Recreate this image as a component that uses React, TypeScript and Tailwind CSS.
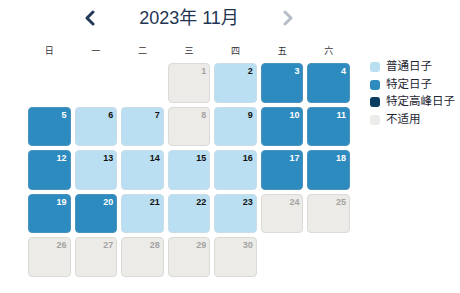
import React from 'react';

type Kind = 'normal' | 'special' | 'peak' | 'na';

const weekdays = ['日', '一', '二', '三', '四', '五', '六'];

// 2023年11月: 1号是星期三
const dayKinds: Record<number, Kind> = {
  1: 'na', 2: 'normal', 3: 'special', 4: 'special',
  5: 'special', 6: 'normal', 7: 'normal', 8: 'na', 9: 'normal', 10: 'special', 11: 'special',
  12: 'special', 13: 'normal', 14: 'normal', 15: 'normal', 16: 'normal', 17: 'special', 18: 'special',
  19: 'special', 20: 'special', 21: 'normal', 22: 'normal', 23: 'normal', 24: 'na', 25: 'na',
  26: 'na', 27: 'na', 28: 'na', 29: 'na', 30: 'na',
};

const cellStyles: Record<Kind, string> = {
  normal: 'bg-[#badff2] border-[#c9dde8] text-[#111]',
  special: 'bg-[#2e8bc0] border-[#4a93bd] text-white',
  peak: 'bg-[#0b3d60] border-[#0b3d60] text-white',
  na: 'bg-[#edebe7] border-[#dcdad6] text-[#a3a3a3]',
};

const legend: { label: string; color: string }[] = [
  { label: '普通日子', color: 'bg-[#badff2]' },
  { label: '特定日子', color: 'bg-[#2e8bc0]' },
  { label: '特定高峰日子', color: 'bg-[#0b3d60]' },
  { label: '不适用', color: 'bg-[#edebe7]' },
];

function Chevron({ dir, className }: { dir: 'left' | 'right'; className: string }) {
  return (
    <svg width="12" height="16" viewBox="0 0 12 16" className={className}>
      <path
        d={dir === 'left' ? 'M9 2 L3 8 L9 14' : 'M3 2 L9 8 L3 14'}
        fill="none"
        stroke="currentColor"
        strokeWidth="3"
        strokeLinecap="round"
        strokeLinejoin="round"
      />
    </svg>
  );
}

export default function App() {
  const blanks = 3;
  const cells: (number | null)[] = [
    ...Array.from({ length: blanks }, () => null),
    ...Array.from({ length: 30 }, (_, i) => i + 1),
  ];

  return (
    <div
      className="flex w-[460px] h-[293px] bg-white"
      style={{ fontFamily: '"Liberation Sans", Arial, "Noto Sans CJK SC", sans-serif' }}
    >
      <div className="ml-[28px] w-[322px] pt-[6px]">
        {/* 月份切换 */}
        <div className="flex items-center justify-center h-[24px]">
          <Chevron dir="left" className="text-[#22395a]" />
          <div className="w-[186px] text-center text-[18px] leading-none text-[#1f3553]">2023年 11月</div>
          <Chevron dir="right" className="text-[#b7bdc8]" />
        </div>

        {/* 星期 */}
        <div className="grid grid-cols-7 gap-x-[4px] mt-[15px] h-[12px]">
          {weekdays.map((w) => (
            <div key={w} className="text-center text-[9px] leading-[12px] text-[#333]">{w}</div>
          ))}
        </div>

        {/* 日期 */}
        <div className="grid grid-cols-7 gap-x-[4px] gap-y-[4px] mt-[6px]">
          {cells.map((d, idx) =>
            d === null ? (
              <div key={`b${idx}`} className="h-[39.5px]" />
            ) : (
              <div
                key={d}
                className={`h-[39.5px] rounded-[4px] border ${cellStyles[dayKinds[d]]} flex justify-end`}
              >
                <span className="pr-[3px] pt-[3px] text-[9px] leading-none font-bold">{d}</span>
              </div>
            )
          )}
        </div>
      </div>

      {/* 图例 */}
      <div className="ml-[20px] mt-[61px] flex flex-col gap-y-[5.5px]">
        {legend.map((l) => (
          <div key={l.label} className="flex items-center h-[12px]">
            <span className={`w-[10px] h-[10px] rounded-[3px] ${l.color}`} />
            <span className="ml-[6px] text-[11.5px] leading-none text-[#1d2633]">{l.label}</span>
          </div>
        ))}
      </div>
    </div>
  );
}
